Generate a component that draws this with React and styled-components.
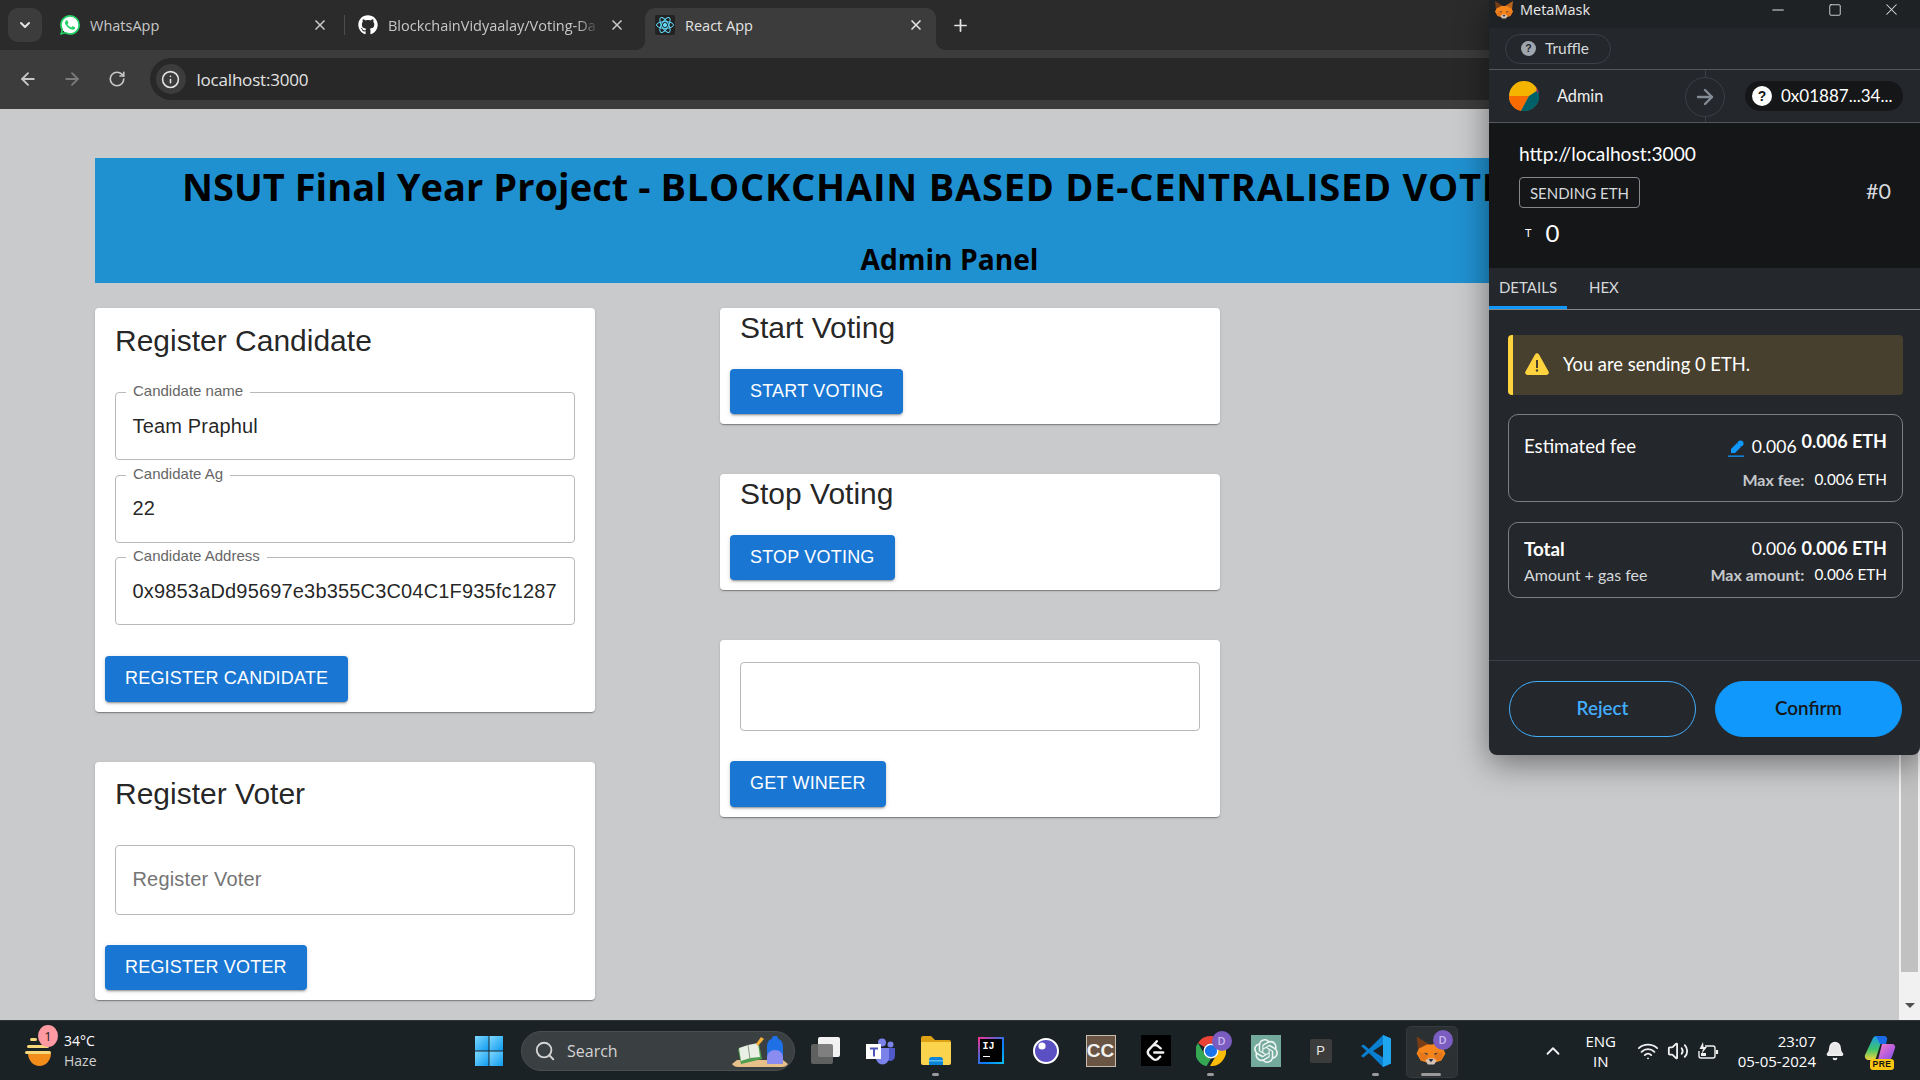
import React from "react";
import styled, { createGlobalStyle } from "styled-components";
import { ArrowLeft, ArrowRight, RotateCw, ChevronDown, ChevronUp, X, Plus, Info, Search, Minus, Square, Wifi, Volume2, Bell } from "lucide-react";
import { FaGithub } from "react-icons/fa";
import { SiWhatsapp, SiOpenai, SiLeetcode } from "react-icons/si";

const ui = `"Open Sans", "Noto Sans", sans-serif`;
const arial = `"Liberation Sans", Arial, sans-serif`;
const mm = `Lato, "Noto Sans", sans-serif`;

const Global = createGlobalStyle`
  html, body { margin: 0; padding: 0; width: 1920px; height: 1080px; overflow: hidden; background: #c9cacc; }
  * { box-sizing: border-box; }
`;

const Desktop = styled.div`position: relative; width: 1920px; height: 1080px; display: flex; flex-direction: column; overflow: hidden; font-family: ${ui};`;

/* browser chrome */
const TabStrip = styled.div`height: 50px; flex: none; background: #2b2b2b; display: flex; align-items: flex-end; padding-left: 8px; color: #c7c7c7;`;
const TabMenu = styled.div`width: 34px; height: 34px; margin-bottom: 8px; border-radius: 10px; background: #3c3c3c; display: flex; align-items: center; justify-content: center; color: #e3e3e3;`;
const Tab = styled.div`
  position: relative; flex: none; width: ${p => p.$w}px; height: 42px; margin-left: ${p => p.$ml}px;
  display: flex; align-items: center; gap: 10px; padding: 0 12px 8px; font-size: 14.5px;
  ${p => p.$active && `
    background: #3c3c3c; border-radius: 10px 10px 0 0; color: #e3e3e3; padding-left: 10px;
    &::before, &::after { content: ""; position: absolute; bottom: 0; width: 10px; height: 10px; }
    &::before { left: -10px; background: radial-gradient(circle at 0 0, transparent 10px, #3c3c3c 10.5px); }
    &::after { right: -10px; background: radial-gradient(circle at 100% 0, transparent 10px, #3c3c3c 10.5px); }
  `}
`;
const TabTitle = styled.span`flex: 1; min-width: 0; white-space: nowrap; overflow: hidden; ${p => p.$fade && `mask-image: linear-gradient(90deg, #000 90%, transparent);`}`;
const TabDivider = styled.div`width: 1px; height: 20px; background: #4d4d4d; margin: 0 0 15px 4px;`;
const WaBadge = styled.span`width: 20px; height: 20px; flex: none; display: flex; border-radius: 50%; background: radial-gradient(circle, #fff 60%, transparent 62%); color: #25d366;`;
const NewTab = styled.div`width: 24px; height: 24px; margin: 0 0 13px 12px; display: flex; align-items: center; justify-content: center; color: #e3e3e3;`;
const Toolbar = styled.div`height: 59px; flex: none; background: #3c3c3c; display: flex; align-items: center; padding: 0 20px 1px 0; color: #c7c7c7;`;
const NavBtn = styled.div`width: 44.5px; display: flex; justify-content: center; color: ${p => p.$off ? "#7b7b7b" : "#c7c7c7"}; &:first-child { margin-left: 5.5px; }`;
const Omnibox = styled.div`flex: 1; height: 42px; margin-left: 10.5px; background: #282828; border-radius: 21px; display: flex; align-items: center; padding-left: 6px; gap: 11px; font-size: 17px; color: #e3e3e3; letter-spacing: -0.2px;`;
const InfoBubble = styled.div`width: 30px; height: 30px; border-radius: 50%; background: #3c3c3c; display: flex; align-items: center; justify-content: center;`;

/* page */
const PageRow = styled.div`flex: 1; min-height: 0; display: flex;`;
const Page = styled.main`flex: 1; min-width: 0; background: #c9cacc; padding: 49px 95px 0; overflow: hidden;`;
const Banner = styled.header`height: 125px; background: #2091d0; color: #000; display: flex; flex-direction: column; font-family: ${ui}; font-weight: 700; overflow: hidden;`;
const BannerTitle = styled.h1`margin: 0; padding: 3px 0 0 87px; font-size: 38px; letter-spacing: 0.05px; line-height: 50px; white-space: nowrap; font-weight: 700;`;
const BannerCaps = styled.span`letter-spacing: 0.78px;`;
const BannerSub = styled.h2`margin: 0; padding-top: 28px; font-size: 28.2px; line-height: 40px; text-align: center;`;
const Columns = styled.div`display: grid; grid-template-columns: 500px 500px; column-gap: 125px; margin-top: 25px; align-items: start; font-family: ${arial};`;
const Column = styled.div`display: flex; flex-direction: column; gap: 50px;`;
const Card = styled.section`background: #fff; border-radius: 4px; padding: ${p => p.$top}px 10px 10px; box-shadow: 0 2px 1px -1px rgba(0,0,0,.2), 0 1px 1px 0 rgba(0,0,0,.14), 0 1px 3px 0 rgba(0,0,0,.12);`;
const CardTitle = styled.h3`margin: 0 10px; font-size: 30px; font-weight: 400; line-height: 40px; color: rgba(0,0,0,.87);`;
const Fields = styled.div`margin: ${p => p.$mt}px 10px 0; display: flex; flex-direction: column; gap: 14.5px;`;
const Field = styled.div`position: relative; height: ${p => p.$h || 68}px; border: 1px solid #b9b9b9; border-radius: 4px; display: flex; align-items: center; padding: 0 16.5px; font-size: 20px; letter-spacing: .17px; color: ${p => p.$ph ? "#757575" : "rgba(0,0,0,.87)"}; white-space: nowrap;`;
const FieldLabel = styled.span`position: absolute; left: 10px; top: -11px; padding: 0 7px; background: #fff; font-size: 15px; letter-spacing: 0; line-height: 18px; color: #666;`;
const Action = styled.button`display: block; height: 45.5px; margin-top: ${p => p.$mt}px; padding: 0 20px 1px; border: 0; border-radius: 4px; background: #1976d2; color: #fff; font: 500 18px/1 ${arial}; text-transform: uppercase; letter-spacing: .2px; box-shadow: 0 3px 1px -2px rgba(0,0,0,.2), 0 2px 2px 0 rgba(0,0,0,.14), 0 1px 5px 0 rgba(0,0,0,.12);`;
const ScrollTrack = styled.div`width: 21px; flex: none; background: #f1f1f1; display: flex; flex-direction: column; align-items: center; padding: 0 2px;`;
const ScrollThumb = styled.div`width: 17px; height: 863px; background: #c1c1c1;`;
const ScrollArrow = styled.div`margin-top: 31px; width: 0; height: 0; border: 5px solid transparent; border-top: 5px solid #505050; border-bottom: 0;`;

/* metamask */
const Wallet = styled.aside`position: absolute; left: 1489px; top: 0; width: 431px; height: 755px; background: #24272b; border-radius: 0 0 8px 8px; box-shadow: 0 8px 32px rgba(0,0,0,.45); display: flex; flex-direction: column; color: #fff; font-family: ${mm}; font-size: 16px;`;
const WinBar = styled.div`height: 28px; flex: none; background: #1f2225; display: flex; align-items: center; padding: 0 0 9px 5px; gap: 6px; font: 14.5px ${ui}; color: #e8e8e8;`;
const WinCtl = styled.div`width: 51px; display: flex; justify-content: center; color: #e0e0e0; ${p => p.$first && "margin-left: auto;"} &:last-child { margin-right: 3px; }`;
const NetRow = styled.div`height: 42px; flex: none; display: flex; align-items: center; padding-left: 16px; border-bottom: 1px solid #54575c;`;
const NetPill = styled.div`width: 106px; height: 30px; border: 1px solid #3b4046; border-radius: 15px; display: flex; align-items: center; padding: 0 0 1px 15px; gap: 9px; color: #d6d9dc; font-size: 15.5px;`;
const QMark = styled.span`width: ${p => p.$s}px; height: ${p => p.$s}px; flex: none; border-radius: 50%; background: ${p => p.$bg}; color: ${p => p.$fg}; display: flex; align-items: center; justify-content: center; font: 700 ${p => p.$s * .7}px ${arial};`;
const AccountRow = styled.div`position: relative; height: 53px; flex: none; display: flex; align-items: center; padding: 0 17px 0 20px; border-bottom: 1px solid #54575c;`;
const AccountName = styled.span`margin-left: 18px; padding-bottom: 2px; font-size: 16.3px; width: 129px; color: #f0f0f0;`;
const HopCircle = styled.div`position: absolute; left: 196px; top: 7px; width: 40px; height: 40px; border: 1px solid #3b4046; border-radius: 50%; background: #24272b; display: flex; align-items: center; justify-content: center; color: #848c96;`;
const HopLine = styled.div`position: absolute; left: 216px; top: 0; bottom: 0; width: 1px; background: #3b4046;`;
const AddrPill = styled.div`margin-left: auto; width: 158px; height: 30px; border-radius: 15px; background: #141618; display: flex; align-items: center; padding: 0 0 1px 7px; gap: 9px; font-size: 17px; white-space: nowrap;`;
const Dapp = styled.div`height: 145px; flex: none; background: #141618; padding: 19px 29px 0 30px; display: flex; flex-direction: column;`;
const Origin = styled.div`font-size: 19.2px; line-height: 24px;`;
const ChipRow = styled.div`display: flex; align-items: center; justify-content: space-between; margin-top: 11px;`;
const Chip = styled.span`width: 121px; height: 31px; border: 1px solid #85888d; border-radius: 4px; display: flex; align-items: center; justify-content: center; font-size: 15px; color: #d6d9dc; white-space: nowrap;`;
const Nonce = styled.span`font-size: 21.5px; color: #d6d9dc; margin-top: -4px;`;
const Amount = styled.div`display: flex; align-items: center; margin: 10px 0 0 6px; gap: 14px; font-size: 24px; line-height: 30px;`;
const AmountUnit = styled.span`font-size: 11px;`;
const TabsRow = styled.div`height: 42px; flex: none; display: flex; border-bottom: 1px solid #85888d; font-size: 15px; color: #d6d9dc;`;
const WalletTab = styled.div`width: ${p => p.$w}px; display: flex; align-items: center; justify-content: ${p => p.$active ? "center" : "flex-start"}; height: 41px; padding-bottom: ${p => p.$active ? 1 : 4}px; ${p => p.$active && "border-bottom: 3px solid #1098fc;"} ${p => !p.$active && "margin-left: 22px;"}`;
const WalletBody = styled.div`flex: 1; padding: 25px 17px 0 19px; display: flex; flex-direction: column;`;
const Warning = styled.div`height: 60px; background: #47402f; border-left: 5px solid #ffd33d; border-radius: 4px; display: flex; align-items: center; padding: 0 0 2px 12px; gap: 14px; font-size: 18.4px;`;
const FeeBox = styled.div`height: ${p => p.$h}px; margin-top: ${p => p.$mt}px; border: 1px solid #7b7e83; border-radius: 10px; padding: ${p => p.$pt}px 15px 0; display: flex; flex-direction: column;`;
const FeeLine = styled.div`display: flex; justify-content: space-between; align-items: center; margin-top: ${p => p.$mt || 0}px; height: ${p => p.$h}px;`;
const FeeLabel = styled.span`font-size: ${p => p.$b ? 18.8 : 18.6}px; font-weight: ${p => p.$b ? 700 : 400};`;
const FeeSub = styled.span`font-size: 16px; color: #d6d9dc;`;
const FeeAmounts = styled.span`display: flex; align-items: center; gap: 5px; font-size: 17.5px;`;
const StrongAmt = styled.b`font-size: 18px; font-weight: 700; ${p => p.$up && `transform: translateY(-${p.$up}px);`}`;
const MaxLine = styled.span`display: flex; align-items: center; gap: 10px; font-size: 15.3px;`;
const MaxKey = styled.b`font-size: 16px; font-weight: 700; color: #c4c8cc;`;
const PenWrap = styled.span`display: flex; margin: 4px 3px 0 0;`;
const Footer = styled.footer`height: 95px; flex: none; border-top: 1px solid #3b4046; padding: 20px 18px 0 20px; display: flex; justify-content: space-between;`;
const WalletBtn = styled.button`width: 187px; height: 56px; padding-bottom: 4px; border-radius: 28px; font: 600 18.8px ${mm}; border: 1px solid #43aefc; background: ${p => p.$primary ? "#1098fc" : "transparent"}; color: ${p => p.$primary ? "#141618" : "#43aefc"}; ${p => p.$primary && "border-color: #1098fc;"}`;

/* taskbar */
const Taskbar = styled.footer`height: 60px; flex: none; background: #1b2226; border-top: 1px solid #2e3236; display: grid; grid-template-columns: 461px auto 1fr; align-items: center; color: #fff;`;
const Weather = styled.div`display: flex; align-items: center; padding-left: 24px; gap: 11px;`;
const WeatherIcon = styled.div`position: relative; width: 29px; height: 32px; flex: none;`;
const Pink = styled.span`position: absolute; left: 14px; top: -10px; width: 20px; height: 22px; border-radius: 50%; background: #ff9aa2; color: #222; font-size: 13px; display: flex; align-items: center; justify-content: center;`;
const WeatherText = styled.div`font-size: 14px; line-height: 20px;`;
const WeatherDim = styled.div`color: #d0d0d0;`;
const Center = styled.div`display: flex; align-items: center; height: 59px;`;
const StartBtn = styled.div`width: 28px; height: 30px; margin: 0 18px 0 14px; display: flex;`;
const SearchBox = styled.div`position: relative; width: 274px; height: 40px; border-radius: 20px; background: #3a3f42; border: 1px solid #4a4e51; display: flex; align-items: center; padding-left: 12px; gap: 11px; font-size: 16px; color: #d4d4d4; margin-right: 3px;`;
const SearchArt = styled.svg`position: absolute; right: 5px; top: 4px;`;
const Slot = styled.div`position: relative; width: 55px; height: 59px; display: flex; align-items: center; justify-content: center; ${p => p.$active && `
  &::before { content: ""; position: absolute; left: 2.5px; top: 5px; width: 50px; height: 50px; border-radius: 5px; background: #2b3033; border: 1px solid #343a3d; }
`}`;
const IconWrap = styled.div`position: relative; display: flex; z-index: 1;`;
const Dot = styled.span`position: absolute; z-index: 1; left: 50%; bottom: 4px; width: ${p => p.$wide ? 20 : 7}px; height: 3px; margin-left: -${p => p.$wide ? 10 : 3.5}px; border-radius: 2px; background: #9a9a9a;`;
const Badge = styled.span`position: absolute; right: -6px; top: -5px; width: 20px; height: 20px; border-radius: 50%; background: #7b5cc0; color: #cdbdf0; font-size: 11px; font-weight: 600; display: flex; align-items: center; justify-content: center;`;
const SquareApp = styled.div`width: ${p => p.$w || 30}px; height: ${p => p.$h || 30}px; background: ${p => p.$bg}; color: ${p => p.$c || "#fff"}; border-radius: ${p => p.$r || 0}px; display: flex; align-items: center; justify-content: center; font: ${p => p.$font || "700 14px " + arial}; ${p => p.$extra || ""}`;
const IdeaBox = styled.div`width: 26px; height: 27px; padding: 2px; background: linear-gradient(135deg, #fc318c, #087cfa 60%, #07c3f2); display: flex;`;
const IdeaInner = styled.div`flex: 1; background: #000; color: #fff; font: 700 10px/11px "Liberation Mono", monospace; padding: 2px 3px; display: flex; flex-direction: column; gap: 4px;`;
const IdeaBar = styled.i`display: block; width: 7px; height: 1px; background: #fff;`;
const Tray = styled.div`display: flex; align-items: center; justify-content: flex-end; height: 59px;`;
const Lang = styled.div`width: 50px; margin: 0 7px 0 8px; text-align: center; font-size: 15px; line-height: 20px;`;
const TrayIcon = styled.div`width: 30px; display: flex; justify-content: center; color: #f0f0f0;`;
const Clock = styled.div`margin: 0 4px 0 15px; text-align: right; font-size: 15px; line-height: 20px; white-space: nowrap;`;
const Copilot = styled.div`position: relative; width: 32px; height: 30px; margin: 0 24px 0 14px;`;
const Pre = styled.span`position: absolute; left: 6px; bottom: -4px; width: 24px; height: 11px; border-radius: 3px; background: #f9c513; color: #111; font: 800 8.5px/11px ${arial}; letter-spacing: .5px; text-align: center;`;

const Fox = ({ s = 20 }) => (
  <svg width={s} height={s} viewBox="0 0 40 38">
    <polygon points="2,1 18,11 15,22 4,18" fill="#763d16" />
    <polygon points="38,1 22,11 25,22 36,18" fill="#b8621a" />
    <polygon points="5,16 15,11 25,11 35,16 38,22 33,31 26,33 14,33 7,31 2,22" fill="#f6851b" />
    <polygon points="5,20 17,24 13,31 7,30" fill="#e4761b" />
    <polygon points="35,20 23,24 27,31 33,30" fill="#e4761b" />
    <polygon points="13,31 17,28 23,28 27,31 24,36 16,36" fill="#d7c1b3" />
    <polygon points="17,29 23,29 20,33" fill="#233447" />
    <polygon points="11,21 16,22 15,24" fill="#233447" />
    <polygon points="29,21 24,22 25,24" fill="#233447" />
  </svg>
);

const ReactLogo = () => (
  <svg width="20" height="20" viewBox="0 0 20 20" fill="none" stroke="#61dafb" strokeWidth="1">
    <rect width="20" height="20" rx="2" fill="#222" stroke="none" />
    <circle cx="10" cy="10" r="1.6" fill="#61dafb" />
    <ellipse cx="10" cy="10" rx="8.5" ry="3.4" />
    <ellipse cx="10" cy="10" rx="8.5" ry="3.4" transform="rotate(60 10 10)" />
    <ellipse cx="10" cy="10" rx="8.5" ry="3.4" transform="rotate(120 10 10)" />
  </svg>
);

const Avatar = () => (
  <svg width="30" height="30" viewBox="0 0 30 30">
    <circle cx="15" cy="15" r="15" fill="#f5b400" />
    <path d="M0 15 L20 15 L12 30 A15 15 0 0 1 0 15Z" fill="#f76b00" />
    <path d="M20 15 L29 9 A15 15 0 0 1 12 29.7Z" fill="#00606a" />
    <path d="M27 6 L29.5 11 L28 12Z" fill="#b0186c" />
  </svg>
);

const WinLogo = () => (
  <svg width="28" height="30" viewBox="0 0 28 30">
    <defs><linearGradient id="wl" x1="0" y1="0" x2="1" y2="1"><stop offset="0" stopColor="#7fd9ff" /><stop offset="1" stopColor="#0f9bf0" /></linearGradient></defs>
    <rect width="13.5" height="14.5" fill="url(#wl)" /><rect x="14.5" width="13.5" height="14.5" fill="url(#wl)" />
    <rect y="15.5" width="13.5" height="14.5" fill="url(#wl)" /><rect x="14.5" y="15.5" width="13.5" height="14.5" fill="url(#wl)" />
  </svg>
);

const TaskView = () => (
  <svg width="30" height="30" viewBox="0 0 30 30">
    <rect x="7" y="1" width="22" height="20" rx="2" fill="#f2f2f2" />
    <rect x="0" y="8" width="22" height="20" rx="2" fill="#6b6b6b" fillOpacity=".85" />
  </svg>
);

const Teams = () => (
  <svg width="30" height="28" viewBox="0 0 30 28">
    <circle cx="24.5" cy="7.5" r="3" fill="#7b83eb" /><circle cx="16" cy="5.5" r="4" fill="#7b83eb" />
    <path d="M18 11h11v8a5 5 0 0 1-8 4z" fill="#5059c9" /><path d="M9 11h14v10a6.5 6.5 0 0 1-13 0z" fill="#7b83eb" />
    <rect x="0" y="7" width="15" height="15" fill="#fff" />
    <path d="M4 10.5h8v2H9v7H7v-7H4z" fill="#4b53bc" />
  </svg>
);

const Folder = () => (
  <svg width="30" height="29" viewBox="0 0 30 29">
    <path d="M0 2a2 2 0 0 1 2-2h8l4 4h14a2 2 0 0 1 2 2v3H0z" fill="#dea214" />
    <path d="M0 6h30v21a2 2 0 0 1-2 2H2a2 2 0 0 1-2-2z" fill="#fcd34d" />
    <path d="M8 29v-5a3 3 0 0 1 3-3h8a3 3 0 0 1 3 3v5z" fill="#0a84d6" />
    <rect x="8" y="24" width="14" height="1.5" fill="#5ab8f0" />
  </svg>
);

const Eye = () => (
  <svg width="26" height="26" viewBox="0 0 26 26">
    <circle cx="13" cy="13" r="12" fill="#5b4fc4" stroke="#fff" strokeWidth="2" />
    <circle cx="9" cy="8" r="3.6" fill="#fff" />
  </svg>
);

const Chrome = () => (
  <svg width="30" height="30" viewBox="0 0 30 30">
    <path d="M15 0a15 15 0 0 1 13 7.5H15a7.5 7.5 0 0 0-6.5 3.75L2 7A15 15 0 0 1 15 0z" fill="#ea4335" />
    <path d="M2 7l6.5 11.25A7.5 7.5 0 0 0 15 22.5l-4.5 7.8A15 15 0 0 1 2 7z" fill="#34a853" />
    <path d="M28 7.5A15 15 0 0 1 14 30l6.5-11.25A7.5 7.5 0 0 0 21.5 11L28 7.5z" fill="#fbbc05" />
    <circle cx="15" cy="15" r="6.8" fill="#1a73e8" stroke="#fff" strokeWidth="1.4" />
  </svg>
);

const VSCode = () => (
  <svg width="30" height="32" viewBox="0 0 30 32">
    <path d="M22 0L8 14 2.5 9.5 0 11l5.5 5L0 21l2.5 1.5L8 18l14 14 8-3.5V3.5z" fill="#0a7fd0" />
    <path d="M22 0l8 3.5v25L22 32V8z" fill="#20a5ef" />
    <path d="M22 9.5L12 16l10 6.5z" fill="#1b2226" />
  </svg>
);

const CopilotArt = () => (
  <svg width="32" height="28" viewBox="0 0 32 28">
    <defs>
      <linearGradient id="cpa" x1="0" y1="0" x2="0" y2="1"><stop offset="0" stopColor="#1a9be8" /><stop offset=".55" stopColor="#3ec46d" /><stop offset="1" stopColor="#f5d33a" /></linearGradient>
      <linearGradient id="cpb" x1="0" y1="0" x2="1" y2="1"><stop offset="0" stopColor="#f77ec0" /><stop offset=".6" stopColor="#b45ce0" /><stop offset="1" stopColor="#6a5ae0" /></linearGradient>
    </defs>
    <path d="M9 2a4 4 0 0 1 4-2h6l-7 22a3 3 0 0 1-3 2H4a4 4 0 0 1-3-5z" fill="url(#cpa)" />
    <path d="M18 8h10a3 3 0 0 1 3 4l-3 9a5 5 0 0 1-5 3h-9z" fill="url(#cpb)" />
    <path d="M12 0h8a3 3 0 0 1 3 4l-1 4h-6z" fill="#1a6be8" />
  </svg>
);

const SunHaze = () => (
  <svg width="29" height="32" viewBox="0 0 29 32">
    <path d="M4 18h23a11.5 13 0 0 1-23 0z" fill="#f28c1a" />
    <rect x="1" y="16" width="26" height="3" rx="1.5" fill="#f6d77a" />
    <rect x="3" y="10" width="22" height="3" rx="1.5" fill="#f6d77a" />
    <rect x="6" y="3" width="7" height="3" rx="1.5" fill="#f6d77a" />
  </svg>
);

const Scene = () => (
  <SearchArt width="58" height="32" viewBox="0 0 58 32">
    <path d="M6 24h46l5 4q-2 3-6 3H7q-4 0-6-3z" fill="#e6c088" />
    <path d="M7 13l21-5 3 15-21 5z" fill="#4f9e4f" />
    <path d="M8 12l9-3 10-2 2 14-10 1-9 3z" fill="#e9efe4" />
    <path d="M17 9l2 14" stroke="#8a9a84" strokeWidth="1" />
    <path d="M25 8l5-7 3 2-6 7z" fill="#f2b03c" />
    <path d="M36 26V10a8 8 0 0 1 16 0v16a2 2 0 0 1-2 2H38a2 2 0 0 1-2-2z" fill="#1f6fe5" />
    <path d="M36 21a8 7 0 0 1 16 0v5a2 2 0 0 1-2 2H38a2 2 0 0 1-2-2z" fill="#8a8cf0" />
    <rect x="41" y="0" width="6" height="4" rx="2" fill="#1f6fe5" />
  </SearchArt>
);

const Battery = () => (
  <svg width="22" height="18" viewBox="0 0 22 18" fill="none" stroke="#f0f0f0" strokeWidth="1.4">
    <path d="M8 4h8a2 2 0 0 1 2 2v8a2 2 0 0 1-2 2H4a2 2 0 0 1-2-2V9" />
    <path d="M20 8v4" strokeWidth="2.2" />
    <path d="M6 0L2.500 7H6L4.500 12 10 5H6.500z" fill="#f0f0f0" stroke="none" />
    <rect x="4" y="11" width="5" height="3" fill="#f0f0f0" stroke="none" />
  </svg>
);

const Pen = () => (
  <svg width="16" height="17" viewBox="0 0 16 17" fill="#1098fc">
    <path d="M9 3l4 4-6 6H3V9z" /><circle cx="12.5" cy="3.5" r="3" /><rect y="15.5" width="16" height="1.3" />
  </svg>
);

const Triangle = () => (
  <svg width="24" height="24" viewBox="0 0 24 24">
    <path d="M10 2.5a2.3 2.3 0 0 1 4 0l9.500 17a2.300 2.300 0 0 1-2 3.500h-19a2.300 2.300 0 0 1-2-3.500z" fill="#ffd33d" />
    <rect x="11" y="8" width="2" height="8" fill="#47402f" /><circle cx="12" cy="18.5" r="1.2" fill="#47402f" />
  </svg>
);

const TaskSlot = ({ dot, active, badge, children }) => (
  <Slot $active={active}>
    <IconWrap>{children}{badge && <Badge>D</Badge>}</IconWrap>
    {dot && <Dot $wide={active} />}
  </Slot>
);

export default function App() {
  return (
    <Desktop>
      <Global />
      <TabStrip>
        <TabMenu><ChevronDown size={16} strokeWidth={3} /></TabMenu>
        <Tab $w={292} $ml={6}><WaBadge><SiWhatsapp size={20} /></WaBadge><TabTitle>WhatsApp</TabTitle><X size={16} strokeWidth={2.5} /></Tab>
        <TabDivider />
        <Tab $w={291} $ml={1}><FaGithub size={20} color="#fff" /><TabTitle $fade>BlockchainVidyaalay/Voting-Da</TabTitle><X size={16} strokeWidth={2.5} /></Tab>
        <Tab $w={291} $ml={8} $active><ReactLogo /><TabTitle>React App</TabTitle><X size={16} strokeWidth={2.5} /></Tab>
        <NewTab><Plus size={19} strokeWidth={2.2} /></NewTab>
      </TabStrip>
      <Toolbar>
        <NavBtn><ArrowLeft size={20} strokeWidth={2.2} /></NavBtn>
        <NavBtn $off><ArrowRight size={20} strokeWidth={2.2} /></NavBtn>
        <NavBtn><RotateCw size={18} strokeWidth={2.2} /></NavBtn>
        <Omnibox><InfoBubble><Info size={19} color="#e3e3e3" /></InfoBubble>localhost:3000</Omnibox>
      </Toolbar>
      <PageRow>
        <Page>
          <Banner>
            <BannerTitle>NSUT Final Year Project - <BannerCaps>BLOCKCHAIN BASED DE-CENTRALISED VOTI</BannerCaps></BannerTitle>
            <BannerSub>Admin Panel</BannerSub>
          </Banner>
          <Columns>
            <Column>
              <Card $top={13}>
                <CardTitle>Register Candidate</CardTitle>
                <Fields $mt={31}>
                  <Field><FieldLabel>Candidate name</FieldLabel>Team Praphul</Field>
                  <Field><FieldLabel>Candidate Ag</FieldLabel>22</Field>
                  <Field><FieldLabel>Candidate Address</FieldLabel>0x9853aDd95697e3b355C3C04C1F935fc1287</Field>
                </Fields>
                <Action $mt={31}>Register Candidate</Action>
              </Card>
              <Card $top={12}>
                <CardTitle>Register Voter</CardTitle>
                <Fields $mt={31}><Field $ph $h={70}>Register Voter</Field></Fields>
                <Action $mt={30}>Register Voter</Action>
              </Card>
            </Column>
            <Column>
              <Card $top={0}>
                <CardTitle>Start Voting</CardTitle>
                <Action $mt={20.5}>Start Voting</Action>
              </Card>
              <Card $top={0}>
                <CardTitle>Stop Voting</CardTitle>
                <Action $mt={20.5}>Stop Voting</Action>
              </Card>
              <Card $top={0}>
                <Fields $mt={22}><Field $h={69} /></Fields>
                <Action $mt={30}>Get Wineer</Action>
              </Card>
            </Column>
          </Columns>
        </Page>
        <ScrollTrack><ScrollThumb /><ScrollArrow /></ScrollTrack>
      </PageRow>
      <Taskbar>
        <Weather>
          <WeatherIcon><SunHaze /><Pink>1</Pink></WeatherIcon>
          <WeatherText>34°C<WeatherDim>Haze</WeatherDim></WeatherText>
        </Weather>
        <Center>
          <StartBtn><WinLogo /></StartBtn>
          <SearchBox><Search size={22} />Search<Scene /></SearchBox>
          <TaskSlot><TaskView /></TaskSlot>
          <TaskSlot><Teams /></TaskSlot>
          <TaskSlot dot><Folder /></TaskSlot>
          <TaskSlot><IdeaBox><IdeaInner>IJ<IdeaBar /></IdeaInner></IdeaBox></TaskSlot>
          <TaskSlot><Eye /></TaskSlot>
          <TaskSlot><SquareApp $bg="#6a5444" $h={32} $c="#f2f2f2" $font={`700 19px ${arial}`} $extra="border: 1px solid #c9bcae;">CC</SquareApp></TaskSlot>
          <TaskSlot><SquareApp $bg="#000" $h={31}><SiLeetcode size={21} color="#f2f2f2" /></SquareApp></TaskSlot>
          <TaskSlot dot badge><Chrome /></TaskSlot>
          <TaskSlot><SquareApp $bg="#74aa9c" $h={32}><SiOpenai size={24} color="#eef5f3" /></SquareApp></TaskSlot>
          <TaskSlot><SquareApp $bg="#3c3c3c" $w={22} $h={24} $r={2} $c="#e8e8e8" $font={`400 13px ${arial}`}>P</SquareApp></TaskSlot>
          <TaskSlot dot><VSCode /></TaskSlot>
          <TaskSlot dot active badge><Fox s={32} /></TaskSlot>
        </Center>
        <Tray>
          <TrayIcon><ChevronUp size={22} strokeWidth={2} /></TrayIcon>
          <Lang>ENG<br />IN</Lang>
          <TrayIcon><Wifi size={22} /></TrayIcon>
          <TrayIcon><Volume2 size={22} /></TrayIcon>
          <TrayIcon><Battery /></TrayIcon>
          <Clock>23:07<br />05-05-2024</Clock>
          <TrayIcon><Bell size={20} fill="#e8e8e8" /></TrayIcon>
          <Copilot><CopilotArt /><Pre>PRE</Pre></Copilot>
        </Tray>
      </Taskbar>
      <Wallet>
        <WinBar>
          <Fox s={20} />MetaMask
          <WinCtl $first><Minus size={18} strokeWidth={1.5} /></WinCtl>
          <WinCtl><Square size={14} strokeWidth={1.5} /></WinCtl>
          <WinCtl><X size={19} strokeWidth={1.3} /></WinCtl>
        </WinBar>
        <NetRow><NetPill><QMark $s={15} $bg="#9fa6ae" $fg="#24272b">?</QMark>Truffle</NetPill></NetRow>
        <AccountRow>
          <HopLine />
          <Avatar />
          <AccountName>Admin</AccountName>
          <HopCircle><ArrowRight size={24} strokeWidth={2.4} /></HopCircle>
          <AddrPill><QMark $s={20} $bg="#fff" $fg="#141618">?</QMark>0x01887...34...</AddrPill>
        </AccountRow>
        <Dapp>
          <Origin>http://localhost:3000</Origin>
          <ChipRow><Chip>SENDING ETH</Chip><Nonce>#0</Nonce></ChipRow>
          <Amount><AmountUnit>T</AmountUnit>0</Amount>
        </Dapp>
        <TabsRow><WalletTab $active $w={78}>DETAILS</WalletTab><WalletTab>HEX</WalletTab></TabsRow>
        <WalletBody>
          <Warning><Triangle />You are sending 0 ETH.</Warning>
          <FeeBox $h={88} $mt={19} $pt={11}>
            <FeeLine $h={40}>
              <FeeLabel>Estimated fee</FeeLabel>
              <FeeAmounts><PenWrap><Pen /></PenWrap>0.006 <StrongAmt $up={5}>0.006 ETH</StrongAmt></FeeAmounts>
            </FeeLine>
            <FeeLine $h={24} $mt={1}>
              <span />
              <MaxLine><MaxKey>Max fee:</MaxKey>0.006 ETH</MaxLine>
            </FeeLine>
          </FeeBox>
          <FeeBox $h={76} $mt={20} $pt={13}>
            <FeeLine $h={24}><FeeLabel $b>Total</FeeLabel><FeeAmounts>0.006 <StrongAmt>0.006 ETH</StrongAmt></FeeAmounts></FeeLine>
            <FeeLine $h={24} $mt={2}><FeeSub>Amount + gas fee</FeeSub><MaxLine><MaxKey>Max amount:</MaxKey>0.006 ETH</MaxLine></FeeLine>
          </FeeBox>
        </WalletBody>
        <Footer><WalletBtn>Reject</WalletBtn><WalletBtn $primary>Confirm</WalletBtn></Footer>
      </Wallet>
    </Desktop>
  );
}
